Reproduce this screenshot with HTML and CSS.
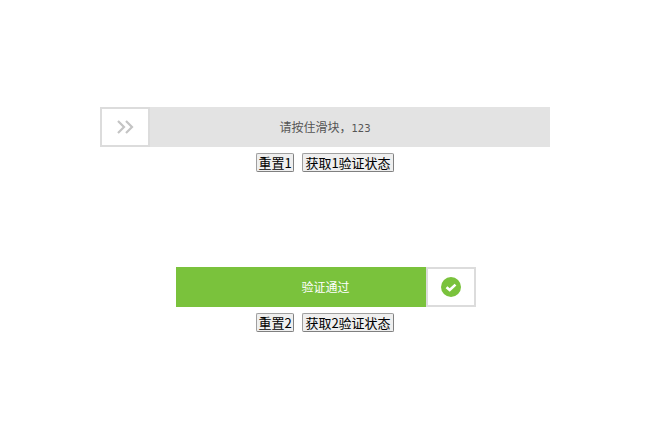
FILE: index.html
```html
<!DOCTYPE HTML>
<html>
<head>
  <meta charset="utf-8">
  <title>滑块验证</title>
  <link rel="stylesheet" href="styles.css">
</head>
<body>

  <div class="demo demo-first">
    <div class="drag drag-wide">
      <div class="drag-text">请按住滑块，<span class="drag-num">123</span></div>
      <div class="drag-handle">
        <svg class="icon" width="18" height="14" viewBox="0 0 18 14">
          <path d="M2 1 L8 7 L2 13 M10 1 L16 7 L10 13" fill="none" stroke="#c4c4c4" stroke-width="2.2"/>
        </svg>
      </div>
    </div>
    <div class="demo-btns">
      <button class="btn" type="button">重置1</button>
      <button class="btn btn-long" type="button">获取1验证状态</button>
    </div>
  </div>

  <div class="demo demo-second">
    <div class="drag drag-narrow drag-ok">
      <div class="drag-text">验证通过</div>
      <div class="drag-handle">
        <svg class="icon" width="20" height="20" viewBox="0 0 20 20">
          <circle cx="10" cy="10" r="10" fill="#7ac23c"/>
          <path d="M5.5 10.2 L8.7 13 L14.5 7.6" fill="none" stroke="#fff" stroke-width="2.6"/>
        </svg>
      </div>
    </div>
    <div class="demo-btns">
      <button class="btn" type="button">重置2</button>
      <button class="btn btn-long" type="button">获取2验证状态</button>
    </div>
  </div>

</body>
</html>
```

FILE: styles.css
```css
html,
body {
  margin: 0;
  padding: 0;
  background: #fff;
}
body {
  font-family: "Noto Sans CJK SC", "Liberation Sans", sans-serif;
}
.demo {
  display: flex;
  flex-direction: column;
  align-items: center;
}
.demo-first {
  padding-top: 107px;
}
.demo-second {
  padding-top: 95px;
}
.drag {
  position: relative;
  height: 40px;
  box-sizing: border-box;
  background: #e3e3e3;
}
.drag-wide {
  width: 450px;
}
.drag-narrow {
  width: 300px;
  margin-left: 1px;
}
.drag-ok {
  background: #7ac23c;
}
.drag-handle {
  position: absolute;
  left: 0;
  top: 0;
  width: 50px;
  height: 40px;
  box-sizing: border-box;
  border: 2px solid #dcdcdc;
  background: #fff;
  display: flex;
  align-items: center;
  justify-content: center;
}
.drag-ok .drag-handle {
  left: auto;
  right: 0;
}
.drag-text {
  line-height: 40px;
  text-align: center;
  font-size: 12px;
  color: #555;
}
.drag-ok .drag-text {
  color: #fff;
}
.drag-num {
  font-family: "DejaVu Sans", sans-serif;
  font-size: 10px;
}
.demo-btns {
  display: flex;
  gap: 8px;
  margin-top: 6px;
}
.btn {
  height: 19px;
  width: 38px;
  padding: 0;
  margin: 0;
  box-sizing: border-box;
  border: 1px solid #a0a0a0;
  border-right-color: #808080;
  border-bottom-color: #808080;
  border-radius: 2px;
  background: #efefef;
  color: #000;
  font-family: "Noto Sans CJK SC", "Liberation Sans", sans-serif;
  font-size: 13px;
  line-height: 17px;
  white-space: nowrap;
}
.btn-long {
  width: 92px;
}
```
